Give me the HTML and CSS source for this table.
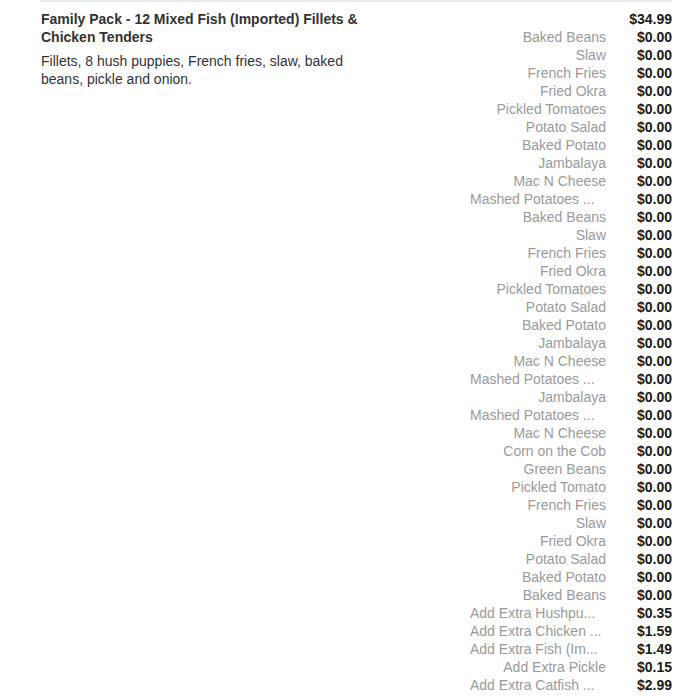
FILE: index.html
```html
<!DOCTYPE html>
<html>
<head>
<meta charset="utf-8">
<link rel="stylesheet" href="styles.css">
</head>
<body>
<div class="item">
  <div class="info">
    <div class="title">Family Pack - 12 Mixed Fish (Imported) Fillets &amp; Chicken Tenders</div>
    <div class="desc">Fillets, 8 hush puppies, French fries, slaw, baked beans, pickle and onion.</div>
  </div>
  <div class="prices">
    <div class="row"><span class="name"></span><span class="price">$34.99</span></div>
    <div class="row"><span class="name">Baked Beans</span><span class="price">$0.00</span></div>
    <div class="row"><span class="name">Slaw</span><span class="price">$0.00</span></div>
    <div class="row"><span class="name">French Fries</span><span class="price">$0.00</span></div>
    <div class="row"><span class="name">Fried Okra</span><span class="price">$0.00</span></div>
    <div class="row"><span class="name">Pickled Tomatoes</span><span class="price">$0.00</span></div>
    <div class="row"><span class="name">Potato Salad</span><span class="price">$0.00</span></div>
    <div class="row"><span class="name">Baked Potato</span><span class="price">$0.00</span></div>
    <div class="row"><span class="name">Jambalaya</span><span class="price">$0.00</span></div>
    <div class="row"><span class="name">Mac N Cheese</span><span class="price">$0.00</span></div>
    <div class="row"><span class="name trunc">Mashed Potatoes ...</span><span class="price">$0.00</span></div>
    <div class="row"><span class="name">Baked Beans</span><span class="price">$0.00</span></div>
    <div class="row"><span class="name">Slaw</span><span class="price">$0.00</span></div>
    <div class="row"><span class="name">French Fries</span><span class="price">$0.00</span></div>
    <div class="row"><span class="name">Fried Okra</span><span class="price">$0.00</span></div>
    <div class="row"><span class="name">Pickled Tomatoes</span><span class="price">$0.00</span></div>
    <div class="row"><span class="name">Potato Salad</span><span class="price">$0.00</span></div>
    <div class="row"><span class="name">Baked Potato</span><span class="price">$0.00</span></div>
    <div class="row"><span class="name">Jambalaya</span><span class="price">$0.00</span></div>
    <div class="row"><span class="name">Mac N Cheese</span><span class="price">$0.00</span></div>
    <div class="row"><span class="name trunc">Mashed Potatoes ...</span><span class="price">$0.00</span></div>
    <div class="row"><span class="name">Jambalaya</span><span class="price">$0.00</span></div>
    <div class="row"><span class="name trunc">Mashed Potatoes ...</span><span class="price">$0.00</span></div>
    <div class="row"><span class="name">Mac N Cheese</span><span class="price">$0.00</span></div>
    <div class="row"><span class="name">Corn on the Cob</span><span class="price">$0.00</span></div>
    <div class="row"><span class="name">Green Beans</span><span class="price">$0.00</span></div>
    <div class="row"><span class="name">Pickled Tomato</span><span class="price">$0.00</span></div>
    <div class="row"><span class="name">French Fries</span><span class="price">$0.00</span></div>
    <div class="row"><span class="name">Slaw</span><span class="price">$0.00</span></div>
    <div class="row"><span class="name">Fried Okra</span><span class="price">$0.00</span></div>
    <div class="row"><span class="name">Potato Salad</span><span class="price">$0.00</span></div>
    <div class="row"><span class="name">Baked Potato</span><span class="price">$0.00</span></div>
    <div class="row"><span class="name">Baked Beans</span><span class="price">$0.00</span></div>
    <div class="row"><span class="name trunc">Add Extra Hushpu...</span><span class="price">$0.35</span></div>
    <div class="row"><span class="name trunc">Add Extra Chicken ...</span><span class="price">$1.59</span></div>
    <div class="row"><span class="name trunc">Add Extra Fish (Im...</span><span class="price">$1.49</span></div>
    <div class="row"><span class="name">Add Extra Pickle</span><span class="price">$0.15</span></div>
    <div class="row"><span class="name trunc">Add Extra Catfish ...</span><span class="price">$2.99</span></div>
  </div>
</div>
</body>
</html>
```
FILE: styles.css
```css
body {
  margin: 0;
  background: #fff;
  font-family: "Liberation Sans", Arial, sans-serif;
}
.item {
  margin-left: 40px;
  width: 632px;
  border-top: 2px solid #ebebeb;
  padding-top: 8px;
  display: flex;
  justify-content: space-between;
}
.info {
  width: 330px;
  padding-left: 1px;
}
.title {
  font-size: 14px;
  font-weight: bold;
  color: #333;
  line-height: 18px;
}
.desc {
  margin-top: 6px;
  font-size: 14px;
  color: #333;
  line-height: 18px;
}
.prices {
  display: flex;
  flex-direction: column;
}
.row {
  display: flex;
  height: 18px;
  line-height: 18px;
}
.name {
  width: 136px;
  text-align: right;
  font-size: 14px;
  color: #9a9a9a;
  white-space: nowrap;
  overflow: hidden;
}
.name.trunc {
  text-align: left;
}
.price {
  width: 66px;
  text-align: right;
  font-size: 14px;
  font-weight: bold;
  color: #1a1a1a;
}
```
